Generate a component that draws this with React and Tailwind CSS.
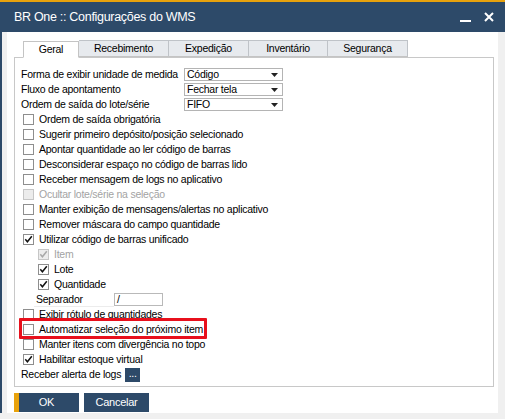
import React from 'react';

// SAP B1 style settings dialog
const tabs = ['Geral', 'Recebimento', 'Expedição', 'Inventário', 'Segurança'];
const tabWidths = ['w-[56px]', 'w-[90px]', 'w-[80px]', 'w-[79px]', 'w-[80px]'];

function Check({ checked, disabled }) {
    return (
        <span
            className={`w-[11px] h-[11px] shrink-0 border flex items-center justify-center ${
                disabled ? 'border-[#c6c6c6] bg-[#ececec]' : 'border-[#8e8e8e] bg-white'
            }`}
        >
            {checked && (
                <svg viewBox="0 0 9 9" className="w-[9px] h-[9px]">
                    <path
                        d="M1.3 4.3 L3.4 6.8 L7.8 1.2"
                        fill="none"
                        stroke={disabled ? '#a8a8a8' : '#111'}
                        strokeWidth="1.5"
                    />
                </svg>
            )}
        </span>
    );
}

function CheckRow({ label, checked, disabled, sub, children }) {
    return (
        <div className={`relative h-[15px] flex items-center ${sub ? 'pl-[17px]' : 'pl-[2px]'}`}>
            <Check checked={checked} disabled={disabled} />
            <span className={`ml-[5px] whitespace-nowrap ${disabled ? 'text-[#a3a3a3]' : 'text-black'}`}>{label}</span>
            {children}
        </div>
    );
}

function Select({ value }) {
    return (
        <div className="w-[99px] h-[13px] border border-[#b4b4b4] bg-white flex items-center pl-[2px] pr-[4px]">
            <span className="flex-1 leading-none">{value}</span>
            <svg viewBox="0 0 7 4" className="w-[7px] h-[4px]">
                <path d="M0 0 H7 L3.5 4 Z" fill="#222" />
            </svg>
        </div>
    );
}

const selects = [
    ['Forma de exibir unidade de medida', 'Código'],
    ['Fluxo de apontamento', 'Fechar tela'],
    ['Ordem de saída do lote/série', 'FIFO'],
];

export default function App() {
    return (
        <div className="w-[505px] h-[419px] bg-[#f0f0f0] flex flex-col overflow-hidden font-['Liberation_Sans',Arial,sans-serif] text-[10.5px] tracking-[-0.25px] text-black">
            <div className="h-[2px] bg-[#e8a20c]" />
            <div className="h-[30px] bg-[#2d4a69] flex items-center pl-[14px] pr-[11px]">
                <span className="text-white text-[12.5px] tracking-[-0.3px] flex-1">BR One :: Configurações do WMS</span>
                <span className="w-[11px] h-[2px] bg-white mt-[8px] mr-[13px]" />
                <svg viewBox="0 0 10 10" className="w-[10px] h-[10px]">
                    <path d="M1 1 L9 9 M9 1 L1 9" stroke="#fff" strokeWidth="2" />
                </svg>
            </div>
            <div className="flex">
                <div className="w-[2px] bg-[#2d4a69]" />
                <div className="w-[5px]" />
                <div className="w-[491px] h-[381px] bg-white pt-[9px] pl-[7px]">
                    {/* tabs */}
                    <div className="flex ml-[9px] h-[16px]">
                        {tabs.map((t, i) => (
                            <div
                                key={t}
                                className={`${tabWidths[i]} relative z-10 h-[17px] flex items-center justify-center border border-l-0 first:border-l ${
                                    i === 0
                                        ? 'bg-white border-[#c4c4c4] border-b-white'
                                        : 'bg-[#e7eaee] border-[#bfc3c8] border-b-[#c4c4c4] h-[16px] self-end'
                                }`}
                            >
                                {t}
                            </div>
                        ))}
                    </div>

                    {/* panel */}
                    <div className="w-[480px] h-[330px] border border-[#c8c8c8] pt-[9px] px-[6px]">
                        {selects.map(([l, v]) => (
                            <div key={l} className="h-[15px] flex items-center">
                                <span className="w-[163px] whitespace-nowrap">{l}</span>
                                <Select value={v} />
                            </div>
                        ))}
                        <CheckRow label="Ordem de saída obrigatória" />
                        <CheckRow label="Sugerir primeiro depósito/posição selecionado" />
                        <CheckRow label="Apontar quantidade ao ler código de barras" />
                        <CheckRow label="Desconsiderar espaço no código de barras lido" />
                        <CheckRow label="Receber mensagem de logs no aplicativo" />
                        <CheckRow label="Ocultar lote/série na seleção" disabled />
                        <CheckRow label="Manter exibição de mensagens/alertas no aplicativo" />
                        <CheckRow label="Remover máscara do campo quantidade" />
                        <CheckRow label="Utilizar código de barras unificado" checked />
                        <CheckRow label="Item" checked disabled sub />
                        <CheckRow label="Lote" checked sub />
                        <CheckRow label="Quantidade" checked sub />
                        <div className="h-[15px] flex items-center pl-[13px]">
                            <span className="w-[80px] pl-[2px] border-b border-[#ececec] leading-[13px]">Separador</span>
                            <div className="w-[49px] h-[13px] border border-[#b9b9b9] pl-[2px] flex items-center">/</div>
                        </div>
                        <CheckRow label="Exibir rótulo de quantidades" />
                        <CheckRow label="Automatizar seleção do próximo item">
                            <div className="absolute left-[-2px] top-[-4px] w-[188px] h-[21px] border-[3px] border-[#e8101c] rounded-[1px]" />
                        </CheckRow>
                        <CheckRow label="Manter itens com divergência no topo" />
                        <CheckRow label="Habilitar estoque virtual" checked />
                        <div className="h-[15px] flex items-center">
                            <span className="whitespace-nowrap">Receber alerta de logs</span>
                            <div className="ml-[4px] w-[15px] h-[14px] bg-[#2d4a69] text-white flex items-center justify-center leading-none pb-[3px]">...</div>
                        </div>
                    </div>

                    {/* buttons */}
                    <div className="flex gap-[5px] mt-[6px] text-[11px]">
                        <button className="w-[65px] h-[19px] bg-[#2d4a69] text-white border-l-[5px] border-[#e8a20c] pr-[5px]">OK</button>
                        <button className="w-[65px] h-[19px] bg-[#2d4a69] text-white">Cancelar</button>
                    </div>
                </div>
            </div>
        </div>
    );
}
